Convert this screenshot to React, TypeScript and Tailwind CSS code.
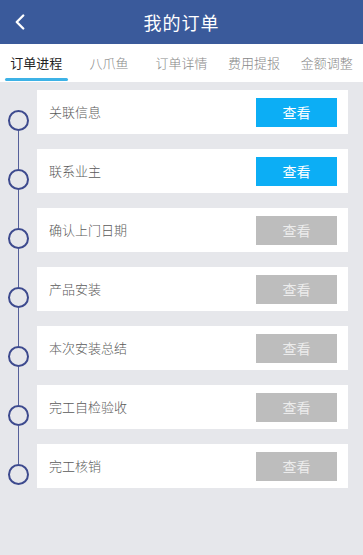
import { ChevronLeft } from 'lucide-react';

const tabs = ['订单进程', '八爪鱼', '订单详情', '费用提报', '金额调整'];

const steps = [
  { label: '关联信息', active: true },
  { label: '联系业主', active: true },
  { label: '确认上门日期', active: false },
  { label: '产品安装', active: false },
  { label: '本次安装总结', active: false },
  { label: '完工自检验收', active: false },
  { label: '完工核销', active: false },
];

export default function App() {
  return (
    <div
      className="w-[363px] h-[555px] bg-[#e6e7eb] overflow-hidden font-light"
      style={{ fontFamily: '"Noto Sans CJK SC", "Noto Sans", sans-serif' }}
    >
      {/* Header */}
      <header className="h-[44px] bg-[#3a5a9b] flex items-center relative">
        <ChevronLeft className="absolute left-[7px] top-[9px] w-[26px] h-[26px] text-white" strokeWidth={2.2} />
        <h1 className="flex-1 text-center text-white text-[18px] font-normal tracking-[1px]">我的订单</h1>
      </header>

      {/* Tabs */}
      <nav className="h-[38px] bg-white grid grid-cols-5">
        {tabs.map((t, i) => (
          <div key={t} className="relative flex items-center justify-center">
            <span className={i === 0 ? 'text-[13px] text-[#222] font-normal' : 'text-[13px] text-[#888]'}>{t}</span>
            {i === 0 && <div className="absolute bottom-[1px] left-[5px] w-[63px] h-[3px] rounded-full bg-[#3db2e6]"></div>}
          </div>
        ))}
      </nav>

      {/* Timeline */}
      <main className="pt-[8px]">
        {steps.map((s, i) => (
          <div key={s.label} className="flex h-[59px]">
            <div className="w-[37px] flex flex-col items-center">
              <div className={i === 0 ? 'h-[20px] w-[1.5px]' : 'h-[20px] w-[1.5px] bg-[#56609a]'}></div>
              <div className="w-[21px] h-[21px] rounded-full border-2 border-[#3d4a8e] shrink-0"></div>
              <div className={i === steps.length - 1 ? 'flex-1 w-[1.5px]' : 'flex-1 w-[1.5px] bg-[#56609a]'}></div>
            </div>
            <div className="flex-1 mr-[15px] h-[44px] bg-white flex items-center justify-between pl-[12px] pr-[11px]">
              <span className="text-[13px] text-[#5a5a5a]">{s.label}</span>
              <button
                className={
                  s.active
                    ? 'w-[81px] h-[29px] bg-[#0caef5] text-white text-[14px] font-normal'
                    : 'w-[81px] h-[29px] bg-[#bdbdbd] text-[#ececec] text-[14px] font-normal'
                }
              >
                查看
              </button>
            </div>
          </div>
        ))}
      </main>
    </div>
  );
}
